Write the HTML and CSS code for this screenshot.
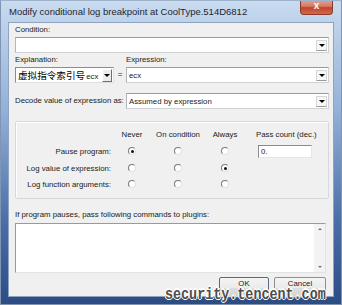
FILE: index.html
```html
<!DOCTYPE html>
<html lang="en">
<head>
<meta charset="UTF-8">
<title>Modify conditional log breakpoint</title>
<link rel="stylesheet" href="styles.css">
</head>
<body>
<div class="window">
    <!-- title bar -->
    <div class="titlebar">
        <span class="title">Modify conditional log breakpoint at CoolType.514D6812</span>
        <span class="close">x</span>
    </div>
    <div class="client">
        <div class="label">Condition:</div>
        <div class="combo"><span class="value"></span><span class="drop"></span></div>

        <div class="expl-row">
            <div class="col-expl">
                <div class="label">Explanation:</div>
                <div class="combo expl"><span class="value"><span class="cjk">虚拟指令索引号</span>ecx</span><span class="drop raised"></span></div>
            </div>
            <div class="eq">=</div>
            <div class="col-expr">
                <div class="label">Expression:</div>
                <div class="combo"><span class="value">ecx</span><span class="drop"></span></div>
            </div>
        </div>

        <div class="decode-row">
            <div class="label">Decode value of expression as:</div>
            <div class="combo"><span class="value">Assumed by expression</span><span class="drop"></span></div>
        </div>

        <!-- pause / log options -->
        <div class="group">
            <div class="grid">
                <span></span>
                <span class="head">Never</span>
                <span class="head">On condition</span>
                <span class="head">Always</span>
                <span class="head pass">Pass count (dec.)</span>

                <span class="row-label">Pause program:</span>
                <span class="cell"><i class="radio on"></i></span>
                <span class="cell"><i class="radio"></i></span>
                <span class="cell"><i class="radio"></i></span>
                <span class="cell-left"><span class="edit">0.</span></span>

                <span class="row-label">Log value of expression:</span>
                <span class="cell"><i class="radio"></i></span>
                <span class="cell"><i class="radio"></i></span>
                <span class="cell"><i class="radio on"></i></span>
                <span></span>

                <span class="row-label">Log function arguments:</span>
                <span class="cell"><i class="radio"></i></span>
                <span class="cell"><i class="radio"></i></span>
                <span class="cell"><i class="radio"></i></span>
                <span></span>
            </div>
        </div>

        <div class="label plugins">If program pauses, pass following commands to plugins:</div>
        <div class="memo">
            <div class="scroll">
                <span class="arrow up"></span>
                <span class="arrow down"></span>
            </div>
        </div>

        <div class="buttons">
            <div class="btn default"><span>OK</span></div>
            <div class="btn"><span>Cancel</span></div>
        </div>
    </div>
    <div class="watermark">security.tencent.com</div>
</div>
</body>
</html>
```

FILE: styles.css
```css
body{
    margin: 0;
    background: #fff;
}
.window{
    position: relative; /* watermark sits over the buttons */
    width: 342px;
    height: 305px;
    box-sizing: border-box;
    padding: 0 7px 8px 7px;
    background: linear-gradient(to bottom, #c9dbef 0, #bcd1ea 24px, #93b0d8 110px, #4a6ea6 220px, #2c4c84 100%);
    border: 1px solid #7f95b3;
    border-top-color: #9fb3cc;
    font-family: "Liberation Sans", Arial, sans-serif;
    font-size: 7.8px;
    color: #1a1a1a;
    overflow: hidden;
}
/* title bar */
.titlebar{
    height: 21px;
    display: flex;
    align-items: flex-start;
}
.title{
    margin-top: 5px;
    padding-left: 1px;
    font-size: 9.5px;
    color: #1c2633;
    white-space: nowrap;
}
.close{
    margin-left: auto;
    margin-right: 1px;
    width: 33px;
    height: 15px;
    margin-top: -1px;
    box-sizing: border-box;
    border: 1px solid #8a3a2c;
    border-top: none;
    border-radius: 0 0 4px 4px;
    background: linear-gradient(to bottom, #e5a494 0, #d47a64 45%, #c0452c 55%, #d06a4c 100%);
    color: #fff;
    font-weight: bold;
    font-size: 10px;
    text-align: center;
    line-height: 12px;
}
.client{
    height: 275px;
    box-sizing: border-box;
    padding: 2px 4px 0 6px;
    background: #f0f0f0;
    border: 1px solid #8ea4c2;
}
.label{
    height: 10px;
    line-height: 10px;
    white-space: nowrap;
}
/* combo boxes */
.combo{
    display: flex;
    align-items: center;
    height: 16px;
    margin-top: 2px;
    box-sizing: border-box;
    background: #fff;
    border: 1px solid #cfd1d4;
    border-top-color: #9a9c9f;
    border-left-color: #b4b6b9;
}
.combo .value{
    flex: 1;
    padding-left: 2px;
    white-space: nowrap;
    overflow: hidden;
}
.drop{
    position: relative;
    width: 11px;
    height: 11px;
    margin-right: 1px;
    box-sizing: border-box;
    border: 1px solid #d6d6d6;
    border-bottom-color: #9a9a9a;
    background: #f7f7f7;
}
.drop::after{
    content: "";
    position: absolute;
    left: 2px;
    top: 3px;
    border-left: 3px solid transparent;
    border-right: 3px solid transparent;
    border-top: 3px solid #000;
}
.drop.raised{
    width: 10px;
    height: 13px;
    border-color: #fff #6f6f6f #6f6f6f #fff;
    background: #ececec;
}
.drop.raised::after{
    top: 4px;
    left: 1px;
}
.expl-row{
    display: flex;
    margin-top: 2px;
}
.col-expl{
    width: 99px;
}
.combo.expl{
    border-color: #8c8c8c #e0e0e0 #e0e0e0 #8c8c8c;
}
.cjk{
    font-family: "Noto Sans CJK SC", sans-serif;
    font-size: 9.6px;
    margin-right: 1px;
    color: #000;
}
.eq{
    width: 12px;
    padding-top: 15px;
    text-align: center;
    font-size: 8px;
}
.col-expr{
    flex: 1;
}
.decode-row{
    display: flex;
    align-items: center;
    margin-top: 10px;
}
.decode-row .label{
    width: 111px;
}
.decode-row .combo{
    flex: 1;
    margin-top: 0;
}
/* group box with the radio grid */
.group{
    margin-top: 12px;
    height: 78px;
    box-sizing: border-box;
    padding-top: 5px;
    border: 1px solid #d5d9dd;
    border-radius: 2px;
    box-shadow: inset 1px 1px 0 #fff;
}
.grid{
    display: grid;
    grid-template-columns: 101px 30px 62px 32px 1fr;
    grid-template-rows: 15px 18px 16px 16px;
    align-items: center;
}
.head{
    text-align: center;
    white-space: nowrap;
}
.head.pass{
    text-align: left;
    padding-left: 15px;
}
.row-label{
    text-align: right;
    padding-right: 6px;
    white-space: nowrap;
}
.cell{
    display: flex;
    justify-content: center;
}
.cell-left{
    padding-left: 17px;
}
.radio{
    display: block;
    position: relative;
    width: 8px;
    height: 8px;
    box-sizing: border-box;
    border-radius: 50%;
    border: 1px solid;
    border-color: #7a7a7a #e2e2e2 #e2e2e2 #7a7a7a;
    background: #fff;
}
.radio.on::after{
    content: "";
    position: absolute;
    left: 1.5px;
    top: 1.5px;
    width: 3px;
    height: 3px;
    border-radius: 50%;
    background: #111;
}
.edit{
    display: block;
    width: 54px;
    height: 13px;
    box-sizing: border-box;
    padding-left: 2px;
    line-height: 11px;
    background: #fff;
    border: 1px solid #e6e6e6;
    border-top-color: #8a8a8a;
    border-left-color: #8a8a8a;
}
.plugins{
    margin-top: 11px;
}
/* commands box */
.memo{
    display: flex;
    justify-content: flex-end;
    margin-top: 3px;
    margin-right: 3px;
    height: 50px;
    box-sizing: border-box;
    background: #fff;
    border: 1px solid #e3e3e3;
    border-top-color: #9a9a9a;
    border-left-color: #9a9a9a;
}
.scroll{
    display: flex;
    flex-direction: column;
    justify-content: space-between;
    align-items: center;
    width: 11px;
    padding: 4px 0;
    box-sizing: border-box;
    background: #f3f3f3;
}
.arrow{
    width: 0;
    height: 0;
    border-left: 2px solid transparent;
    border-right: 2px solid transparent;
}
.arrow.up{
    border-bottom: 2px solid #777;
}
.arrow.down{
    border-top: 2px solid #777;
}
.buttons{
    display: flex;
    justify-content: flex-end;
    gap: 5px;
    margin-top: 4px;
    margin-right: 3px;
}
.btn{
    height: 21px;
    width: 52px;
    padding-top: 2px;
    box-sizing: border-box;
    text-align: center;
    line-height: 8px;
    color: #1a1a1a;
    border: 1px solid #8e8f8f;
    border-radius: 2px;
    background: linear-gradient(to bottom, #f4f4f4 0, #ebebeb 50%, #dddddd 51%, #d6d6d6 100%);
}
.btn.default{
    width: 50px;
    border-color: #5a6b80;
}
/* watermark printed over the corner */
.watermark{
    position: absolute;
    left: 164px;
    top: 288px;
    font-family: "Liberation Mono", monospace;
    font-weight: bold;
    font-size: 13.4px;
    line-height: 9px;
    color: #4d4d4d;
    transform: scaleY(1.2);
    transform-origin: top left;
    text-shadow: 1px 0 0 #fff, -1px 0 0 #fff, 0 1px 0 #fff, 0 -1px 0 #fff;
    white-space: nowrap;
}
```
